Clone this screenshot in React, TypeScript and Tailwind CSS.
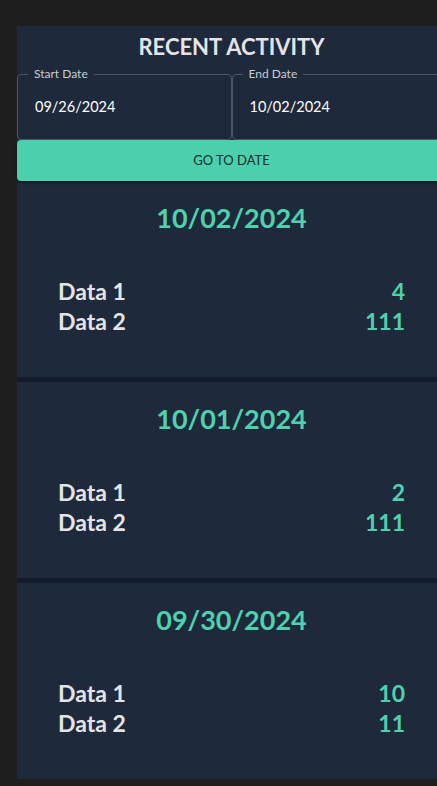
const entries = [
  { date: '10/02/2024', data1: 4, data2: 111 },
  { date: '10/01/2024', data1: 2, data2: 111 },
  { date: '09/30/2024', data1: 10, data2: 11 },
];

const font = { fontFamily: 'Lato, "Noto Sans", sans-serif' };

function DateField({ label, value }: { label: string; value: string }) {
  return (
    <fieldset className="h-[72px] flex-1 rounded-[4px] border border-[#4b5567] px-[10px]">
      <legend className="px-[6px] text-[12px] leading-[12px] text-[#c9ccd3]">{label}</legend>
      <div className="ml-[7px] mt-[17px] text-[14.5px] leading-[20px] text-white">{value}</div>
    </fieldset>
  );
}

function ActivityCard({ date, data1, data2 }: { date: string; data1: number; data2: number }) {
  return (
    <div className="h-[196px] bg-[#1e293b] px-[41px] pt-[19px]">
      <h2 className="text-center text-[27px] font-bold leading-[36px] text-[#4fd1ae]">{date}</h2>
      <div className="mt-[40px] flex flex-col text-[23px] font-bold leading-[30px]">
        <div className="flex justify-between">
          <span className="text-[#e4e4e7]">Data 1</span>
          <span className="text-[#4fd1ae]">{data1}</span>
        </div>
        <div className="flex justify-between">
          <span className="text-[#e4e4e7]">Data 2</span>
          <span className="text-[#4fd1ae]">{data2}</span>
        </div>
      </div>
    </div>
  );
}

export default function App() {
  return (
    <div className="h-screen overflow-hidden bg-[#1e1e1e] pt-[26px]" style={font}>
      <div className="ml-[17px] w-[429px] bg-[#141b2b]">
        <div className="h-[44px] border-b-2 border-[#172033] bg-[#1e293b]">
          <h1 className="pt-[7px] text-center text-[22px] font-bold leading-[28px] text-[#e4e4e7]">
            RECENT ACTIVITY
          </h1>
        </div>
        <div className="bg-[#1e293b]">
          <div className="relative -mt-[2px] flex">
            <DateField label="Start Date" value="09/26/2024" />
            <DateField label="End Date" value="10/02/2024" />
          </div>
          <button
            type="button"
            className="relative h-[41px] w-full rounded-[4px] bg-[#4bcfad] text-[13px] text-[#17302c] shadow-[0_2px_3px_rgba(0,0,0,0.35)]"
          >
            GO TO DATE
          </button>
        </div>
        <div className="flex flex-col gap-[5px]">
          {entries.map((entry) => (
            <ActivityCard key={entry.date} {...entry} />
          ))}
        </div>
      </div>
    </div>
  );
}
